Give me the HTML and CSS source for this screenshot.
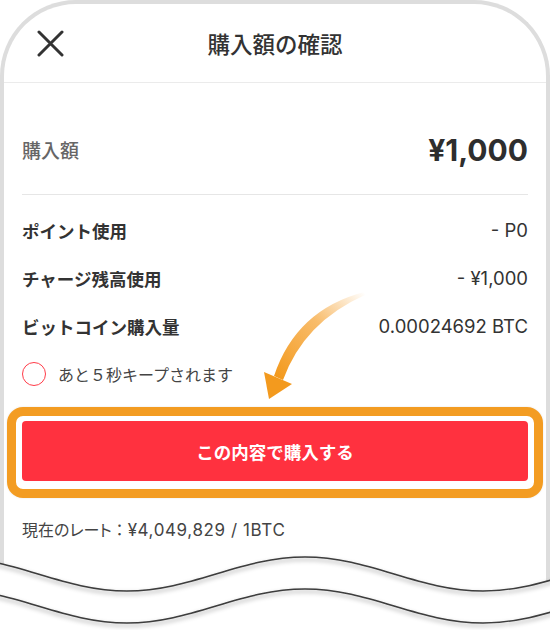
FILE: index.html
```html
<!DOCTYPE html>
<html lang="ja">
<head>
    <meta charset="UTF-8">
    <meta name="viewport" content="width=device-width, initial-scale=1.0">
    <link rel="stylesheet" href="styles.css">
    <title>購入額の確認</title>
</head>
<body>
    <div class="phone">
        <header class="bar">
            <span class="close">
                <svg width="27" height="27" viewBox="0 0 27 27">
                    <path d="M2 2 L25 25 M25 2 L2 25" stroke="#333" stroke-width="3" stroke-linecap="round" fill="none"/>
                </svg>
            </span>
            <h1 class="title">購入額の確認</h1>
            <span></span>
        </header>

        <div class="content">
            <div class="total">
                <span class="total-label">購入額</span>
                <span class="total-value">¥1,000</span>
            </div>

            <ul class="details">
                <li><span class="label">ポイント使用</span><span class="value">- P0</span></li>
                <li><span class="label">チャージ残高使用</span><span class="value">- ¥1,000</span></li>
                <li><span class="label">ビットコイン購入量</span><span class="value">0.00024692 BTC</span></li>
            </ul>

            <div class="timer">
                <span class="ring"></span>
                <span>あと５秒キープされます</span>
            </div>

            <div class="highlight">
                <button class="buy">この内容で購入する</button>
            </div>

            <p class="rate">現在のレート<span class="colon">：</span><span class="rate-num">¥4,049,829 / 1BTC</span></p>
        </div>
    </div>

    <!-- annotation arrow + torn edge drawn over the screen -->
    <svg class="overlay" width="550" height="630" viewBox="0 0 550 630">
        <defs>
            <linearGradient id="tail" gradientUnits="userSpaceOnUse" x1="364" y1="292" x2="280" y2="378">
                <stop offset="0" stop-color="#f6a63a" stop-opacity="0"/>
                <stop offset="0.45" stop-color="#f6a63a" stop-opacity="0.75"/>
                <stop offset="1" stop-color="#f39a1e"/>
            </linearGradient>
            <filter id="soft" x="-5%" y="-50%" width="110%" height="200%">
                <feDropShadow dx="0" dy="2.5" stdDeviation="2" flood-color="#000" flood-opacity="0.4"/>
            </filter>
        </defs>
        <path d="M364 292 Q296 310 274 376 L283 380 Q304 322 365 295 Z" fill="url(#tail)"/>
        <path d="M269 399 L264 372 L292 384 Z" fill="#f39a1e"/>

        <path d="M-51 557 C14 557 62 591 127 591 C192 591 240 557 305 557 C370 557 418 591 483 591 C548 591 596 557 661 557 L661 640 L-51 640 Z" fill="#fff"/>
        <path d="M-51 557 C14 557 62 591 127 591 C192 591 240 557 305 557 C370 557 418 591 483 591 C548 591 596 557 661 557" fill="none" stroke="#3c3c3c" stroke-width="1.6" filter="url(#soft)"/>
        <path d="M-51 589 C14 589 62 623 127 623 C192 623 240 589 305 589 C370 589 418 623 483 623 C548 623 596 589 661 589 L661 640 L-51 640 Z" fill="#fff"/>
        <path d="M-51 589 C14 589 62 623 127 623 C192 623 240 589 305 589 C370 589 418 623 483 623 C548 623 596 589 661 589" fill="none" stroke="#3c3c3c" stroke-width="1.6" filter="url(#soft)"/>
    </svg>
</body>
</html>
```

FILE: styles.css
```css
* {
    box-sizing: border-box;
}

body {
    margin: 0;
    position: relative;
    width: 550px;
    height: 630px;
    overflow: hidden;
    background: #fff;
    font-family: Inter, "Noto Sans CJK JP", sans-serif;
    color: #333;
}

.phone {
    width: 550px;
    height: 630px;
    border: 4px solid #dddddd;
    border-bottom: none;
    border-radius: 76px 76px 0 0;
    background: #fff;
}

.bar {
    display: grid;
    grid-template-columns: 1fr auto 1fr;
    align-items: center;
    height: 79px;
    border-bottom: 1px solid #ebebeb;
}

.close {
    display: flex;
    padding-left: 33px;
}

.title {
    margin: 0;
    font-family: "Noto Sans CJK JP", sans-serif;
    font-size: 22.5px;
    font-weight: 500;
    color: #333;
}

.content {
    padding: 0 18px;
}

.total {
    display: flex;
    justify-content: space-between;
    align-items: center;
    height: 112px;
    padding-top: 22px;
    border-bottom: 1px solid #e6e6e6;
}

.total-label {
    font-family: "Noto Sans CJK JP", sans-serif;
    font-size: 19px;
    font-weight: 500;
    color: #666;
}

.total-value {
    font-size: 30px;
    font-weight: 700;
    color: #2e2e2e;
}

.details {
    list-style: none;
    margin: 0;
    padding: 11px 0 0;
}

.details li {
    display: flex;
    justify-content: space-between;
    align-items: center;
    height: 48px;
}

.label {
    font-family: "Noto Sans CJK JP", sans-serif;
    font-size: 17.5px;
    font-weight: 700;
    color: #333;
}

.value {
    font-size: 18.5px;
    color: #333;
}

.timer {
    display: flex;
    align-items: center;
    gap: 12px;
    height: 48px;
    font-family: "Noto Sans CJK JP", sans-serif;
    font-size: 16px;
    color: #444;
}

.ring {
    width: 24px;
    height: 24px;
    border: 1.6px solid #ff3b48;
    border-radius: 50%;
}

.highlight {
    margin: 9px -15px 0;
    padding: 5px 6px 8px;
    border: 9px solid #f39c22;
    border-radius: 16px;
    box-shadow: 0 0 2px rgba(0, 0, 0, 0.12);
}

.buy {
    display: block;
    width: 100%;
    height: 60px;
    border: none;
    border-radius: 4px;
    background: #ff313f;
    color: #fff;
    font-family: "Noto Sans CJK JP", sans-serif;
    font-size: 17.5px;
    font-weight: 700;
}

.rate {
    margin: 19px 0 0;
    font-family: "Noto Sans CJK JP", sans-serif;
    font-feature-settings: "palt";
    font-size: 16px;
    line-height: 24px;
    color: #444;
}

.colon {
    font-feature-settings: normal;
}

.rate-num {
    font-family: Inter, sans-serif;
    font-size: 17px;
    letter-spacing: 0.6px;
}

.overlay {
    position: absolute;
    top: 0;
    left: 0;
    pointer-events: none;
}
```
